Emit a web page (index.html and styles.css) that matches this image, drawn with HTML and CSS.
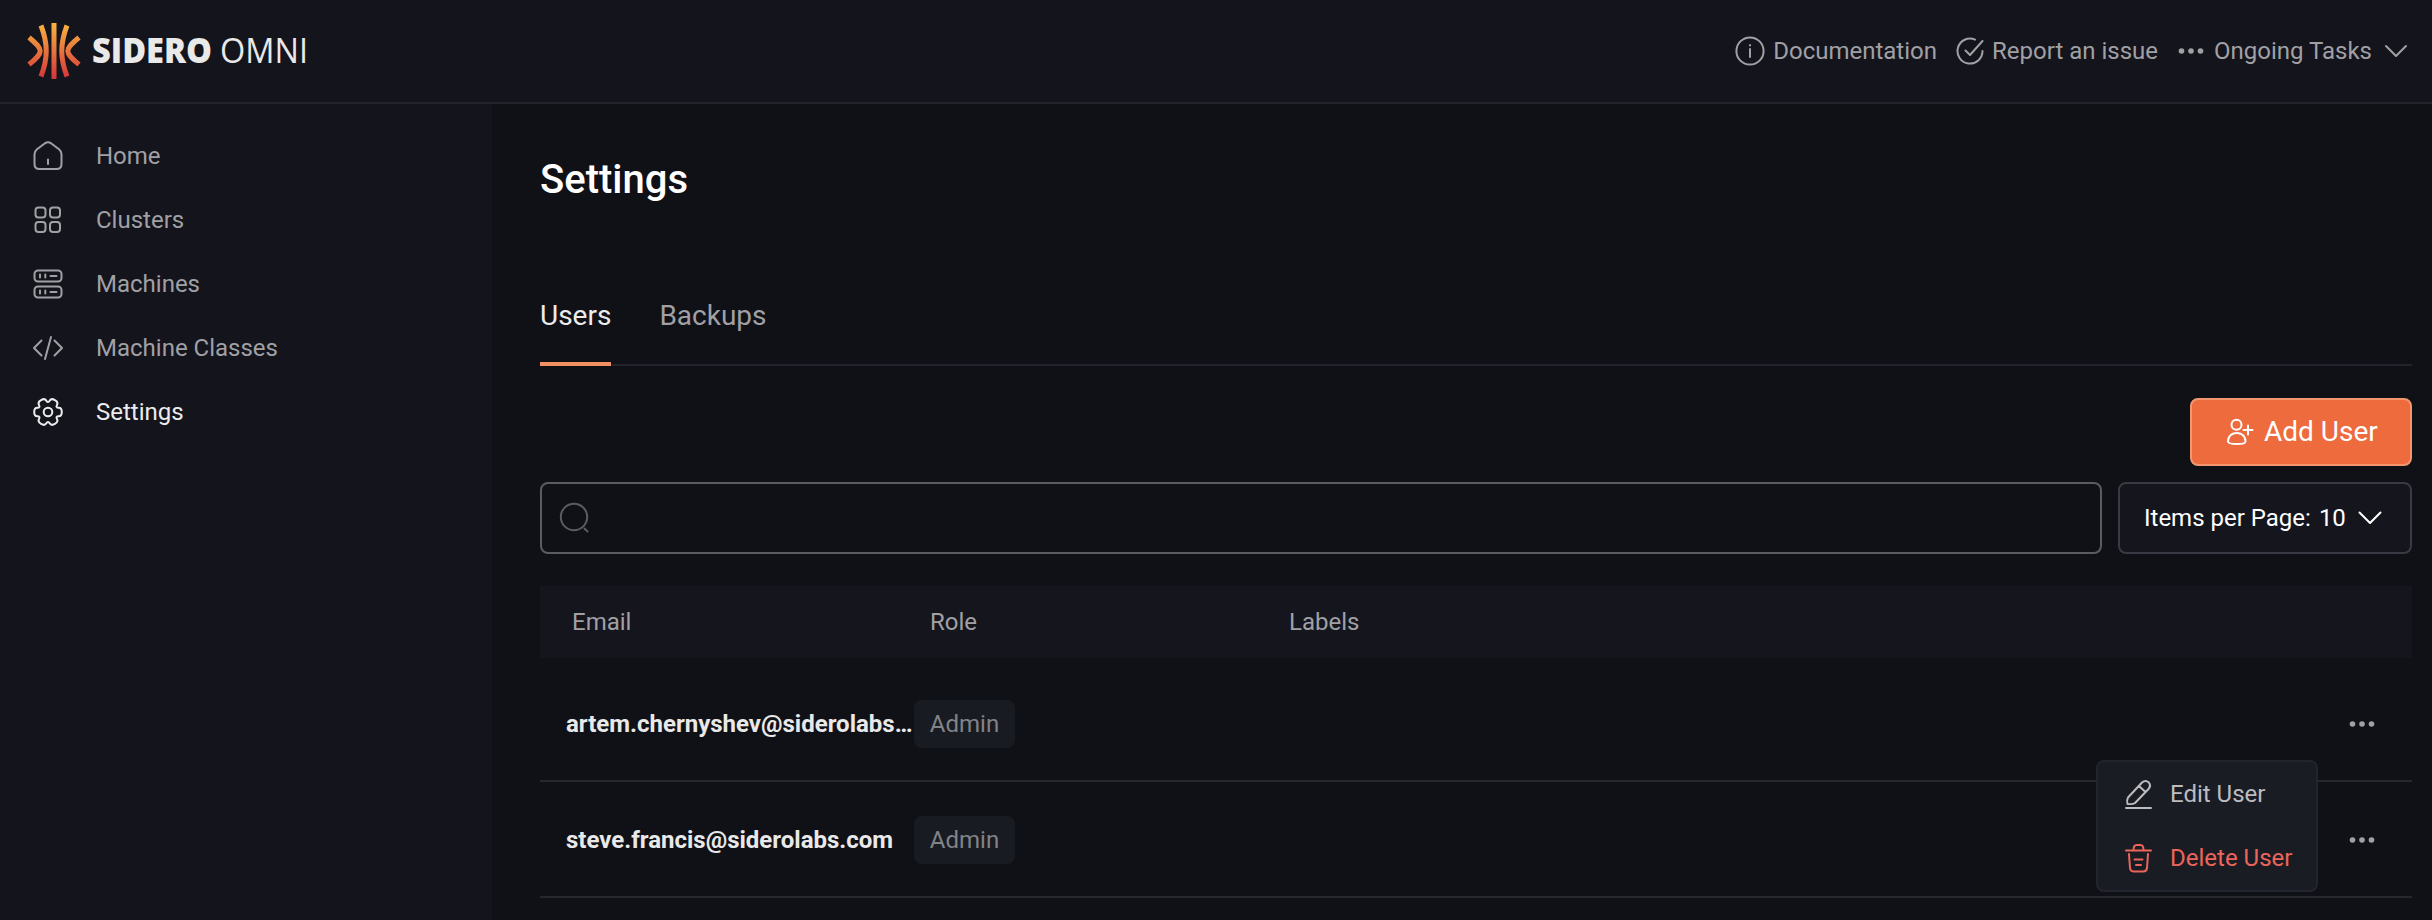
FILE: index.html
```
<!DOCTYPE html>
<html lang="en">
<head>
<meta charset="utf-8">
<title>Settings - Omni</title>
<link rel="stylesheet" href="styles.css">
</head>
<body>
<div class="app">
  <header class="topbar">
    <div class="brand">
      <svg class="logo" width="54" height="58" viewBox="0 0 54 58" fill="none" stroke="url(#flame)" stroke-width="5">
        <defs><linearGradient id="flame" gradientUnits="userSpaceOnUse" x1="0" y1="1" x2="0" y2="57"><stop offset="0" stop-color="#f8b540"/><stop offset="1" stop-color="#d4343a"/></linearGradient></defs>
        <path d="M27 1L27.01 57"/>
        <path d="M14 3.500C21 22 21 36 14 54.500M40 3.500C33 22 33 36 40 54.500"/>
        <path d="M2 15.500C17 28 17 30 2 42.500M52 15.500C37 28 37 30 52 42.500"/>
      </svg>
      <svg class="wordmark" width="224" height="60" viewBox="0 0 224 60">
        <text class="brand-name" x="1" y="42" textLength="120" lengthAdjust="spacingAndGlyphs">SIDERO</text>
        <text class="brand-product" x="129" y="42" textLength="88" lengthAdjust="spacingAndGlyphs">OMNI</text>
      </svg>
    </div>
    <nav class="top-links">
      <a class="top-link"><svg width="30" height="30" viewBox="0 0 30 30" class="icon"><circle cx="15" cy="15" r="13.600"/><path d="M15 13v8M15 9v.5"/></svg><span>Documentation</span></a>
      <a class="top-link"><svg width="28" height="28" viewBox="0 0 28 28" class="icon"><path d="M26.500 14A12.500 12.500 0 1 1 19 2.600M9.500 13.500l4.500 4.500L26.500 4"/></svg><span>Report an issue</span></a>
      <a class="top-link tasks"><svg width="26" height="8" viewBox="0 0 26 8" class="dots"><circle cx="3.500" cy="4" r="2.800"/><circle cx="13" cy="4" r="2.800"/><circle cx="22.500" cy="4" r="2.800"/></svg><span>Ongoing Tasks</span><svg width="24" height="14" viewBox="0 0 24 14" class="icon chevron"><path d="M2 2l10 10L22 2"/></svg></a>
    </nav>
  </header>
  <div class="body">
    <aside class="sidebar">
      <a class="nav-item"><svg width="32" height="32" viewBox="0 0 32 32" class="icon"><path d="M13 3.200q3-2 6 0l8 6q2.500 2 2.500 5V24q0 5-5 5H7.500q-5 0-5-5V14.200q0-3 2.500-5zM16 19.500V24"/></svg><span>Home</span></a>
      <a class="nav-item"><svg width="32" height="32" viewBox="0 0 32 32" class="icon"><rect x="3.500" y="3.500" width="10" height="10" rx="3"/><rect x="18" y="3.500" width="10" height="10" rx="3"/><rect x="3.500" y="18" width="10" height="10" rx="3"/><rect x="18" y="18" width="10" height="10" rx="3"/></svg><span>Clusters</span></a>
      <a class="nav-item"><svg width="32" height="32" viewBox="0 0 32 32" class="icon"><rect x="2.500" y="2.500" width="27" height="11" rx="3.500"/><rect x="2.500" y="18.500" width="27" height="11" rx="3.500"/><path d="M8 6.500v3M13.300 6.500v3M18.500 8H24.500M8 22.500v3M13.300 22.500v3M18.500 24H24.500"/></svg><span>Machines</span></a>
      <a class="nav-item"><svg width="32" height="32" viewBox="0 0 32 32" class="icon"><path d="M9.500 8.500L2 16l7.500 7.500M22.500 8.500L30 16l-7.500 7.500M19 5L13 27"/></svg><span>Machine Classes</span></a>
      <a class="nav-item active"><svg width="32" height="32" viewBox="-16 -16 32 32" class="icon"><path d="M13.800 0Q13.800 4.200 10.600 4.250Q7.450 4.300 9 7.100Q10.540 9.850 6.900 11.950Q3.260 14.050 1.650 11.300Q0 8.600-1.650 11.300Q-3.260 14.050-6.900 11.950Q-10.540 9.850-9 7.100Q-7.450 4.300-10.600 4.250Q-13.800 4.200-13.800 0Q-13.800-4.200-10.600-4.250Q-7.450-4.300-9-7.100Q-10.540-9.850-6.900-11.950Q-3.260-14.050-1.650-11.300Q0-8.600 1.650-11.300Q3.260-14.050 6.900-11.950Q10.540-9.850 9-7.100Q7.450-4.300 10.600-4.250Q13.800-4.200 13.800 0z"/><circle r="4.300"/></svg><span>Settings</span></a>
    </aside>
    <main class="content">
      <h1>Settings</h1>
      <div class="tabs"><a class="tab selected">Users</a><a class="tab">Backups</a></div>
      <div class="actions">
        <button class="add-user"><svg width="28" height="28" viewBox="0 0 28 28" class="icon"><circle cx="10.500" cy="6.800" r="5"/><path d="M2 23.500C2 12 19.500 12 19.500 23.500q0 2.500-8.700 2.500T2 23.500zM22 7.500v9M17.500 12h9"/></svg><span>Add User</span></button>
      </div>
      <div class="filters">
        <div class="search"><svg width="32" height="32" viewBox="0 0 32 32" class="icon"><circle cx="15" cy="15" r="13.200"/><path d="M25.500 26.500l3 3"/></svg></div>
        <button class="page-size"><span>Items per Page:</span><span>10</span><svg width="24" height="14" viewBox="0 0 24 14" class="icon chevron"><path d="M1.500 1.500L12 12 22.500 1.500"/></svg></button>
      </div>
      <div class="thead"><span>Email</span><span>Role</span><span>Labels</span></div>
      <div class="row">
        <span class="email">artem.chernyshev@siderolabs…</span><span class="role">Admin</span>
        <svg width="26" height="8" viewBox="0 0 26 8" class="dots more"><circle cx="3.500" cy="4" r="2.800"/><circle cx="13" cy="4" r="2.800"/><circle cx="22.500" cy="4" r="2.800"/></svg>
        <div class="menu">
          <a class="menu-item"><svg width="30" height="32" viewBox="0 0 30 32" class="icon"><path d="M4 19.500L18 4.500q3.500-3 6.500-.3 3 3.300 0 6.800L11 25q-2 1.500-7.500 1Q2.500 22 4 19.500zM15 8l6.500 6M2 30h25"/></svg><span>Edit User</span></a>
          <a class="menu-item danger"><svg width="30" height="32" viewBox="0 0 30 32" class="icon"><path d="M2 8.500h25M9.500 8q0-5 3-5h4q3 0 3 5M5 12l1 14q.4 3.500 3.500 3.500h10q3 0 3.500-3.500l1-14M10.500 17.500h8M12 23h5"/></svg><span>Delete User</span></a>
        </div>
      </div>
      <div class="row">
        <span class="email">steve.francis@siderolabs.com</span><span class="role">Admin</span>
        <svg width="26" height="8" viewBox="0 0 26 8" class="dots more"><circle cx="3.500" cy="4" r="2.800"/><circle cx="13" cy="4" r="2.800"/><circle cx="22.500" cy="4" r="2.800"/></svg>
      </div>
    </main>
  </div>
</div>
</body>
</html>
```
FILE: styles.css
```
* { box-sizing: border-box; }
body { margin: 0; background: #101116; color: #a0a0a5; font-family: Roboto, sans-serif; font-size: 24px; font-weight: 400; line-height: 32px; }
.app { height: 920px; display: flex; flex-direction: column; overflow: hidden; }
svg { flex: none; display: block; }
.icon { fill: none; stroke: currentColor; stroke-width: 2; stroke-linecap: round; stroke-linejoin: round; }
.dots { fill: currentColor; }
.topbar { flex: none; height: 104px; background: #14141c; border-bottom: 2px solid #22232d; display: flex; align-items: center; justify-content: space-between; padding: 0 24px 0 27px; }
.brand { display: flex; align-items: center; gap: 10px; }
.wordmark { fill: #e9e9e9; font-family: "Open Sans", sans-serif; font-size: 35px; }
.brand-name { font-weight: 800; }
.brand-product { font-weight: 400; }
.top-links { display: flex; gap: 19px; }
.top-link { display: flex; align-items: center; gap: 8px; }
.top-link.tasks { gap: 10px; margin-left: 1px; }
.tasks .chevron { margin-left: 2px; }
.body { flex: 1; display: flex; min-height: 0; }
.sidebar { flex: none; width: 492px; background: #14141c; padding-top: 20px; }
.nav-item { height: 64px; display: flex; align-items: center; gap: 32px; padding-left: 32px; }
.nav-item.active { color: #ececec; }
.content { flex: 1; min-width: 0; padding: 52px 20px 0 48px; display: flex; flex-direction: column; }
h1 { margin: 0; font-size: 40px; line-height: 48px; font-weight: 500; color: #fff; }
.tabs { display: flex; gap: 48px; margin-top: 79px; height: 83px; border-bottom: 2px solid #22232d; font-size: 28px; }
.tab { height: 83px; padding-top: 17px; }
.tab.selected { color: #ececec; border-bottom: 4px solid #f19162; }
.actions { display: flex; justify-content: flex-end; margin-top: 32px; }
button { font: inherit; color: #fff; display: flex; align-items: center; border-radius: 8px; }
.add-user { width: 222px; height: 68px; background: #ed6b3d; border: 2px solid #f3976f; font-size: 28px; padding: 0 0 0 34px; gap: 10px; }
.filters { display: flex; gap: 16px; margin-top: 16px; }
.search { flex: 1; height: 72px; border: 2px solid #5b5c60; border-radius: 8px; display: flex; align-items: center; padding-left: 17px; color: #5b5c60; }
.page-size { width: 294px; height: 72px; background: #15151e; border: 2px solid #393a43; padding: 0 0 0 24px; gap: 8px; }
.page-size .chevron { margin-left: 4px; }
.thead { margin-top: 32px; height: 72px; background: #15151e; display: grid; grid-template-columns: 358px 359px 1fr; align-items: center; padding-left: 32px; }
.row { position: relative; height: 116px; border-bottom: 2px solid #27282d; display: flex; align-items: center; padding: 2px 37px 0 26px; }
.thead + .row { margin-top: 8px; }
.email { width: 348px; font-weight: 700; color: #e9e9e9; white-space: nowrap; }
.role { height: 48px; width: 101px; border-radius: 8px; background: #191b22; line-height: 48px; text-align: center; color: #828387; }
.more { margin-left: auto; }
.menu { position: absolute; z-index: 1; top: 94px; right: 94px; width: 222px; height: 132px; background: #1a1c23; border: 2px solid #22242e; border-radius: 8px; }
.menu-item { height: 64px; display: flex; align-items: center; padding-left: 26px; gap: 16px; color: #bcbcc0; }
.danger { color: #ec655b; }
```
